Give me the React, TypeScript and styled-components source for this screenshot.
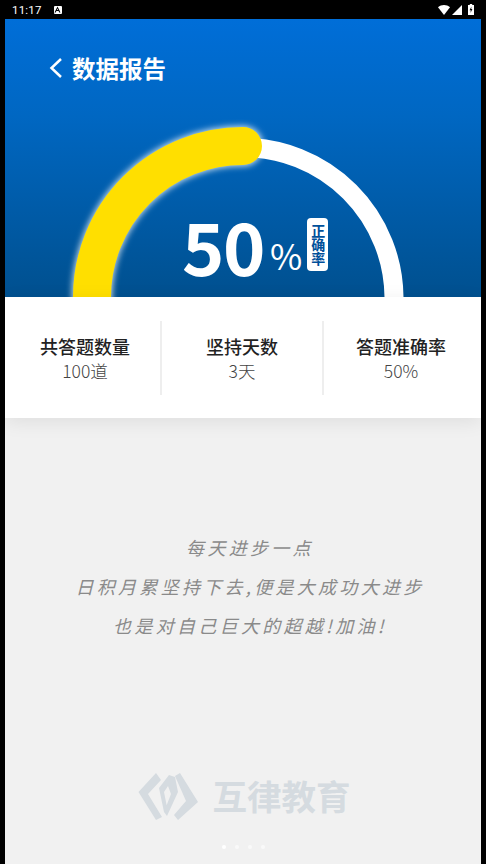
import { createGlobalStyle } from 'styled-components';
import styled from 'styled-components';

const GlobalStyle = createGlobalStyle`
  html, body {
    margin: 0;
    padding: 0;
    background: #000000;
  }
  * {
    box-sizing: border-box;
  }
`;

const cjk = `'Noto Sans CJK SC', 'Noto Sans', sans-serif`;

const stats = [
  { title: '共答题数量', value: '100道' },
  { title: '坚持天数', value: '3天' },
  { title: '答题准确率', value: '50%' },
];

const quotes = [
  '每天进步一点',
  '日积月累坚持下去,便是大成功大进步',
  '也是对自己巨大的超越!加油!',
];

const WifiIcon = () => (
  <svg width="12" height="10" viewBox="0 0 14 11" preserveAspectRatio="none">
    <path d="M0 2.6C2 .9 4.4 0 7 0s5 .9 7 2.6L7 11z" fill="#fff" />
  </svg>
);

const SignalIcon = () => (
  <svg width="10" height="10" viewBox="0 0 11 11">
    <path d="M11 0v11H0z" fill="#fff" />
  </svg>
);

const BatteryIcon = () => (
  <BatterySvg width="6" height="11" viewBox="0 0 6 11">
    <path d="M1.8 0h2.400v1H6v10H0V1h1.800z" fill="#fff" />
    <path d="M3.400 2.500 1.600 6.300h1.200L2.500 9l1.900-3.900H3.200z" fill="#000" />
  </BatterySvg>
);

const NoticeIcon = () => (
  <NoticeBox>
    <svg width="7" height="7" viewBox="0 0 7 7">
      <path d="M3.500 0.500 6.500 6.500H5.200L4.600 5.100H2.400L1.800 6.500H.5zM2.900 4H4.100L3.500 2.500z" fill="#000" />
    </svg>
  </NoticeBox>
);

const Gauge = () => (
  <GaugeSvg viewBox="0 0 476 178">
    <defs>
      <filter id="glow" x="-20%" y="-20%" width="140%" height="140%">
        <feGaussianBlur stdDeviation="3" />
      </filter>
    </defs>
    <path d="M87 179.500A151 151 0 0 1 389 179.500" fill="none" stroke="#ffffff" strokeWidth="19" />
    <path d="M87 178A151 151 0 0 1 238 27" fill="none" stroke="#ffffff" strokeOpacity="0.8" strokeWidth="40" filter="url(#glow)" strokeLinecap="round" />
    <path d="M87 178A151 151 0 0 1 238 27" fill="none" stroke="#ffdf00" strokeWidth="38" strokeLinecap="round" />
  </GaugeSvg>
);

const Logo = () => (
  <svg width="62" height="50" viewBox="5 5 62 50">
    <g fill="#d5dbe0">
      <path d="M7.500 27 25 8 30 15 17 29 31 52 25 55z" />
      <path d="M28 23 38 10 44 12 47 27 36 51 33 47 40 29 37 21 33 27 36 42 33 47z" />
      <path d="M44 11 49 8 67 37 47 55 43 50 55 36z" />
    </g>
  </svg>
);

export default function App() {
  return (
    <>
      <GlobalStyle />
      <Screen>
        <StatusBar>
          <StatusLeft>
            <Clock>11:17</Clock>
            <NoticeIcon />
          </StatusLeft>
          <StatusRight>
            <WifiIcon />
            <SignalIcon />
            <BatteryIcon />
          </StatusRight>
        </StatusBar>
        <Page>
          <Hero>
            <Header>
              <svg width="14" height="22" viewBox="0 0 14 22">
                <path d="M13 2 3.500 11 13 20" fill="none" stroke="#fff" strokeWidth="2.500" />
              </svg>
              <Title>数据报告</Title>
            </Header>
            <GaugeArea>
              <Gauge />
              <Score>
                <ScoreNumber>50</ScoreNumber>
                <ScoreUnit>%</ScoreUnit>
                <ScoreTag>正确率</ScoreTag>
              </Score>
            </GaugeArea>
          </Hero>
          <StatsPanel>
            {stats.map((item) => (
              <StatCell key={item.title}>
                <StatTitle>{item.title}</StatTitle>
                <StatValue>{item.value}</StatValue>
              </StatCell>
            ))}
          </StatsPanel>
          <Bottom>
            <Quote>
              {quotes.map((line) => (
                <QuoteLine key={line}>{line}</QuoteLine>
              ))}
            </Quote>
            <Brand>
              <Logo />
              <BrandName>互律教育</BrandName>
            </Brand>
            <Dots>
              <Dot $active />
              <Dot />
              <Dot />
              <Dot />
            </Dots>
          </Bottom>
        </Page>
      </Screen>
    </>
  );
}

const Screen = styled.div`
  width: 486px;
  height: 864px;
  overflow: hidden;
  display: flex;
  flex-direction: column;
  background: #000000;
`;

const StatusBar = styled.div`
  height: 19px;
  flex-shrink: 0;
  display: flex;
  align-items: center;
  justify-content: space-between;
  padding: 0 12px 0 12px;
`;

const StatusLeft = styled.div`
  display: flex;
  align-items: center;
  gap: 12px;
`;

const StatusRight = styled.div`
  display: flex;
  align-items: center;
  gap: 2px;
`;

const BatterySvg = styled.svg`
  margin-left: 4px;
`;

const Clock = styled.span`
  font-family: Roboto, sans-serif;
  font-size: 11.5px;
  color: #ffffff;
  letter-spacing: 0.2px;
`;

const NoticeBox = styled.span`
  width: 8px;
  height: 8px;
  background: #ffffff;
  border-radius: 1px;
  display: flex;
  align-items: center;
  justify-content: center;
`;

const Page = styled.div`
  flex: 1;
  margin: 0 5px;
  display: flex;
  flex-direction: column;
  background: #f1f1f1;
`;

const Hero = styled.div`
  height: 278px;
  flex-shrink: 0;
  display: flex;
  flex-direction: column;
  background: linear-gradient(180deg, #006ed8 0%, #0067c2 35%, #00508f 100%);
`;

const Header = styled.div`
  display: flex;
  align-items: center;
  gap: 10px;
  padding: 37px 0 0 43px;
`;

const Title = styled.h1`
  margin: 0;
  font-family: ${cjk};
  font-size: 23.5px;
  line-height: 24px;
  font-weight: 700;
  color: #ffffff;
`;

const GaugeArea = styled.div`
  position: relative;
  flex: 1;
  overflow: hidden;
`;

const GaugeSvg = styled.svg`
  position: absolute;
  left: 0;
  bottom: 0;
  width: 476px;
  height: 178px;
`;

const Score = styled.div`
  position: absolute;
  left: 177px;
  top: 138px;
  display: flex;
  align-items: flex-end;
`;

const ScoreNumber = styled.span`
  font-family: ${cjk};
  font-size: 72px;
  line-height: 53px;
  font-weight: 700;
  letter-spacing: -1.500px;
  color: #ffffff;
`;

const ScoreUnit = styled.span`
  margin-left: 6px;
  font-family: ${cjk};
  font-size: 35px;
  line-height: 32px;
  font-weight: 400;
  color: #ffffff;
`;

const ScoreTag = styled.span`
  margin-left: 5px;
  width: 21px;
  height: 53px;
  border-radius: 4px;
  background: #ffffff;
  color: #00509a;
  font-family: ${cjk};
  font-size: 14px;
  line-height: 15px;
  font-weight: 700;
  writing-mode: vertical-rl;
  text-align: center;
  display: flex;
  align-items: center;
  justify-content: center;
`;

const StatsPanel = styled.div`
  height: 121px;
  flex-shrink: 0;
  display: grid;
  grid-template-columns: 152px 162px 1fr;
  padding: 24px 3px 23px 5px;
  background: #ffffff;
  box-shadow: 0 4px 18px rgba(0, 0, 0, 0.08);
  position: relative;
`;

const StatCell = styled.div`
  display: flex;
  flex-direction: column;
  align-items: center;
  justify-content: center;
  border-right: 2px solid #eeeeee;
  &:last-child {
    border-right: none;
  }
`;

const StatTitle = styled.div`
  font-family: ${cjk};
  font-size: 18px;
  line-height: 24px;
  font-weight: 500;
  color: #222222;
`;

const StatValue = styled.div`
  margin-top: 1px;
  font-family: ${cjk};
  font-size: 17.5px;
  line-height: 24px;
  font-weight: 300;
  color: #444444;
`;

const Bottom = styled.div`
  flex: 1;
  display: flex;
  flex-direction: column;
  align-items: center;
`;

const Quote = styled.div`
  margin-top: 110px;
  padding-left: 14px;
  display: flex;
  flex-direction: column;
  align-items: center;
`;

const QuoteLine = styled.div`
  font-family: ${cjk};
  font-size: 18px;
  line-height: 39px;
  font-weight: 400;
  font-style: italic;
  letter-spacing: 3.300px;
  color: #8a8a8a;
`;

const Brand = styled.div`
  margin-top: 125px;
  display: flex;
  align-items: center;
  gap: 15px;
`;

const BrandName = styled.div`
  font-family: ${cjk};
  font-size: 34.5px;
  line-height: 50px;
  font-weight: 700;
  color: #d5dbe0;
`;

const Dots = styled.div`
  margin-top: 25px;
  display: flex;
  gap: 9px;
`;

const Dot = styled.span<{ $active?: boolean }>`
  width: 4px;
  height: 4px;
  border-radius: 50%;
  background: ${(p) => (p.$active ? '#ffffff' : '#f9f9f9')};
`;
